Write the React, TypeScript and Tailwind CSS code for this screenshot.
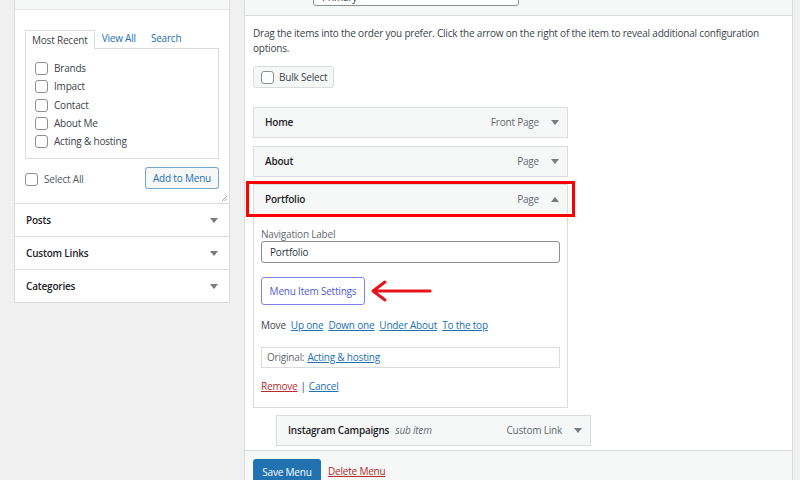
import React from 'react';

const Check = () => (
  <span className="w-[13px] h-[13px] rounded-[3px] border border-[#8c8f94] bg-white shrink-0" />
);

const Caret = ({ up }: { up?: boolean }) => (
  <svg width="8" height="5" viewBox="0 0 8 5" className="shrink-0">
    <path d={up ? 'M0 5L4 0L8 5Z' : 'M0 0L8 0L4 5Z'} fill="#787c82" />
  </svg>
);

const MenuItem = ({ title, type, up, sub }: { title: string; type: string; up?: boolean; sub?: boolean }) => (
  <div className="h-[31px] border border-[#dcdcde] bg-[#f6f7f7] flex items-center pl-[11px] pr-[8px]">
    <span className="font-semibold text-[#1d2327]">{title}</span>
    {sub && <span className="ml-[6px] italic text-[#646970]">sub item</span>}
    <span className="ml-auto text-[#646970]">{type}</span>
    <span className="ml-[12px]">
      <Caret up={up} />
    </span>
  </div>
);

const recent = ['Brands', 'Impact', 'Contact', 'About Me', 'Acting & hosting'];

export default function App() {
  return (
    <div className="w-[800px] h-[480px] bg-[#f0f0f1] flex overflow-hidden font-['Open_Sans',sans-serif] text-[10px] tracking-[-0.2px] text-[#3c434a]">
      {/* left: add menu items */}
      <div className="ml-[14px] w-[216px] h-[303px] bg-white border border-t-0 border-[#dcdcde] flex flex-col shrink-0">
        <div className="h-[10px] shrink-0 bg-[#f6f7f7] border-b border-[#e6e6e6]" />
        <div className="relative shrink-0 px-[10px] pt-[19px] pb-[14px]">
          <div className="flex items-end">
            <div className="relative z-10 -mb-px h-[19px] px-[6px] border border-b-0 border-[#dcdcde] bg-white flex items-center">
              Most Recent
            </div>
            <span className="ml-[7px] h-[19px] flex items-center text-[#2271b1]">View All</span>
            <span className="ml-[15px] h-[19px] flex items-center text-[#2271b1]">Search</span>
          </div>
          <div className="h-[111px] border border-[#dcdcde] pt-[13px] pl-[9px] flex flex-col gap-[5.3px]">
            {recent.map((r) => (
              <div key={r} className="h-[13px] flex items-center gap-[6px]">
                <Check />
                <span>{r}</span>
              </div>
            ))}
          </div>
          <div className="mt-[8px] flex items-center justify-between">
            <div className="flex items-center gap-[6px] pt-[2px]">
              <Check />
              <span className="text-[#50575e]">Select All</span>
            </div>
            <div className="h-[22px] w-[74px] border border-[#2271b1]/60 rounded-[3px] bg-[#f6f7f7] text-[#2271b1] flex items-center justify-center">
              Add to Menu
            </div>
          </div>
          <svg width="6" height="6" viewBox="0 0 6 6" className="absolute right-[2px] bottom-[2px]">
            <path d="M1 6L6 1M3.5 6L6 3.5" stroke="#8c8f94" strokeWidth="0.8" />
          </svg>
        </div>
        {['Posts', 'Custom Links', 'Categories'].map((s) => (
          <div key={s} className="h-[33px] shrink-0 border-t border-[#dcdcde] pl-[11px] pr-[11px] flex items-center justify-between font-semibold text-[#1d2327]">
            <span>{s}</span>
            <Caret />
          </div>
        ))}
      </div>

      {/* right: menu structure */}
      <div className="ml-[14px] w-[549px] h-[480px] bg-white border-x border-[#dcdcde] flex flex-col shrink-0">
        <div className="h-[16px] shrink-0 bg-[#f6f7f7] border-b border-[#dcdcde] pl-[68px] overflow-hidden">
          <div className="-mt-[16px] h-[22px] w-[206px] border border-[#8c8f94] rounded-[3px] bg-white pl-[8px] flex items-end text-[#2c3338]">
            Primary
          </div>
        </div>
        <div className="shrink-0 pl-[8px] pt-[10px]">
          <p className="leading-[15px] whitespace-nowrap">
            Drag the items into the order you prefer. Click the arrow on the right of the item to reveal additional configuration
            <br />
            options.
          </p>
          <div className="mt-[10px] h-[22px] w-[81px] border border-[#dcdcde] bg-[#f6f7f7] rounded-[3px] pl-[7px] flex items-center gap-[5px]">
            <Check />
            <span>Bulk Select</span>
          </div>

          <div className="mt-[19px] w-[315px]">
            <div className="mb-[8px]">
              <MenuItem title="Home" type="Front Page" />
            </div>
            <div className="mb-[7px]">
              <MenuItem title="About" type="Page" />
            </div>
            <div className="relative">
              <MenuItem title="Portfolio" type="Page" up />
              <div className="absolute -left-[7px] -right-[7px] -top-[3px] -bottom-[2px] border-[3px] border-[#ff0000] pointer-events-none" />
            </div>
            <div className="border border-t-0 border-[#dcdcde] px-[7px] pt-[12px] pb-[13px]">
              <div className="text-[#646970] leading-[15px]">Navigation Label</div>
              <div className="mt-[-1px] h-[22px] border border-[#8c8f94] rounded-[3px] pl-[8px] flex items-center text-[#2c3338]">
                Portfolio
              </div>
              <div className="mt-[14px] flex items-center">
                <div className="h-[28px] w-[104px] border border-[#7c83ec] rounded-[3px] flex items-center justify-center text-[#4f5bd5]">
                  Menu Item Settings
                </div>
                <svg width="62" height="24" viewBox="0 0 62 24" className="ml-[5px]">
                  <path d="M3 12H60M15 3L3 12L15 21" stroke="#e8141b" strokeWidth="3" fill="none" strokeLinecap="round" strokeLinejoin="round" />
                </svg>
              </div>
              <div className="mt-[13px] h-[15px] flex items-center">
                <span>Move</span>
                <span className="ml-[5px] text-[#2271b1] underline">Up one</span>
                <span className="ml-[5px] text-[#2271b1] underline">Down one</span>
                <span className="ml-[5px] text-[#2271b1] underline">Under About</span>
                <span className="ml-[5px] text-[#2271b1] underline">To the top</span>
              </div>
              <div className="mt-[14px] h-[21px] border border-[#dcdcde] pl-[5px] flex items-center">
                <span className="text-[#646970]">Original:</span>
                <span className="ml-[3px] text-[#2271b1] underline">Acting &amp; hosting</span>
              </div>
              <div className="mt-[11px] h-[15px] flex items-center">
                <span className="text-[#b32d2e] underline">Remove</span>
                <span className="mx-[3px]">|</span>
                <span className="text-[#2271b1] underline">Cancel</span>
              </div>
            </div>
            <div className="mt-[7px] ml-[23px] w-[315px]">
              <MenuItem title="Instagram Campaigns" type="Custom Link" sub />
            </div>
          </div>
        </div>
        <div className="mt-[4px] flex-1 shrink-0 min-h-[34px] border-t border-[#dcdcde] bg-[#f6f7f7] pl-[8px] pt-[8px] flex items-start">
          <div className="h-[26px] w-[68px] shrink-0 rounded-[3px] bg-[#2271b1] text-white flex items-center justify-center">
            Save Menu
          </div>
          <span className="ml-[7px] mt-[5px] text-[#b32d2e] underline">Delete Menu</span>
        </div>
      </div>
    </div>
  );
}
